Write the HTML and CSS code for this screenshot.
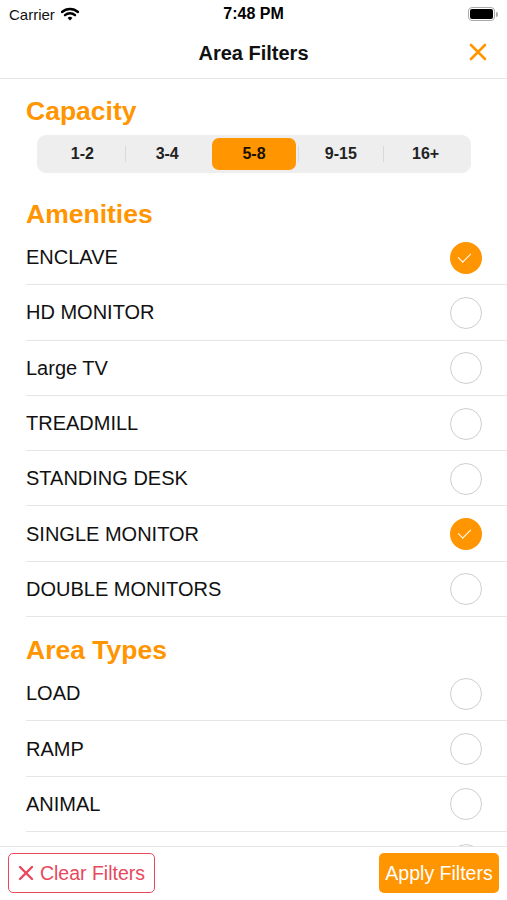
FILE: index.html
```html
<!DOCTYPE html>
<html lang="en">
<head>
    <meta charset="UTF-8">
    <meta name="viewport" content="width=device-width, initial-scale=1.0">
    <title>Area Filters</title>
    <link rel="stylesheet" href="styles.css">
</head>
<body>

<div class="screen">
    <div class="status-bar">
        <div class="carrier">
            Carrier
            <svg class="wifi" width="18" height="14" viewBox="0 0 18 14">
                <path d="M1 5 A12 12 0 0 1 17 5" fill="none" stroke="#000" stroke-width="2.4" stroke-linecap="round"/>
                <path d="M4 8.2 A7.5 7.5 0 0 1 14 8.2" fill="none" stroke="#000" stroke-width="2.4" stroke-linecap="round"/>
                <path d="M9 13.5 L6.6 11 A3.4 3.4 0 0 1 11.4 11 Z" fill="#000"/>
            </svg>
        </div>
        <div class="clock">7:48 PM</div>
        <div class="battery">
            <span class="battery-body"><span class="battery-level"></span></span>
            <span class="battery-cap"></span>
        </div>
    </div>

    <div class="nav-bar">
        <h1>Area Filters</h1>
        <svg class="close" width="18" height="18" viewBox="0 0 18 18">
            <path d="M2 2 L16 16 M16 2 L2 16" stroke="#ff9500" stroke-width="2.6" stroke-linecap="round"/>
        </svg>
    </div>

    <div class="content">
        <h2 class="section-title first">Capacity</h2>
        <div class="segmented">
            <div class="segment">1-2</div>
            <div class="segment divided">3-4</div>
            <div class="segment selected">5-8</div>
            <div class="segment divided">9-15</div>
            <div class="segment divided">16+</div>
        </div>

        <h2 class="section-title">Amenities</h2>
        <ul class="option-list">
            <li>ENCLAVE <span class="check on"></span></li>
            <li>HD MONITOR <span class="check"></span></li>
            <li>Large TV <span class="check"></span></li>
            <li>TREADMILL <span class="check"></span></li>
            <li>STANDING DESK <span class="check"></span></li>
            <li>SINGLE MONITOR <span class="check on"></span></li>
            <li>DOUBLE MONITORS <span class="check"></span></li>
        </ul>

        <h2 class="section-title">Area Types</h2>
        <ul class="option-list">
            <li>LOAD <span class="check"></span></li>
            <li>RAMP <span class="check"></span></li>
            <li>ANIMAL <span class="check"></span></li>
            <!-- next row sits under the footer, only its circle peeks out -->
            <li><span></span> <span class="check"></span></li>
        </ul>
    </div>

    <div class="footer">
        <button class="btn-clear">
            <svg width="16" height="16" viewBox="0 0 16 16">
                <path d="M2 2 L14 14 M14 2 L2 14" stroke="#e8485c" stroke-width="2.4" stroke-linecap="round"/>
            </svg>
            <span>Clear Filters</span>
        </button>
        <button class="btn-apply">Apply Filters</button>
    </div>
</div>

</body>
</html>
```

FILE: styles.css
```css
body {
    margin: 0;
    font-family: "Liberation Sans", Arial, sans-serif;
    background-color: #fff;
    color: #000;
}

.screen {
    height: 900px;
    display: flex;
    flex-direction: column;
    overflow: hidden;
}

/* status bar */
.status-bar {
    height: 28px;
    display: flex;
    align-items: center;
    justify-content: space-between;
    padding: 0 9px;
    flex-shrink: 0;
}

.carrier {
    flex: 1;
    display: flex;
    align-items: center;
    gap: 6px;
    font-size: 15px;
    color: #111;
}

.clock {
    font-size: 16px;
    font-weight: bold;
}

.battery {
    flex: 1;
    display: flex;
    justify-content: flex-end;
    align-items: center;
}

.battery-body {
    width: 23px;
    height: 10px;
    border: 1.5px solid #aaa;
    border-radius: 4px;
    padding: 1px;
    display: flex;
}

.battery-level {
    flex: 1;
    background-color: #000;
    border-radius: 2px;
}

.battery-cap {
    width: 2px;
    height: 5px;
    margin-left: 1px;
    background-color: #aaa;
    border-radius: 0 2px 2px 0;
}

/* nav bar */
.nav-bar {
    height: 50px;
    border-bottom: 1px solid #e6e6e6;
    display: flex;
    align-items: center;
    justify-content: center;
    position: relative;
    flex-shrink: 0;
}

.nav-bar h1 {
    margin: 0;
    font-size: 20px;
    font-weight: bold;
    color: #111;
}

.nav-bar .close {
    position: absolute;
    right: 20px;
    top: 15px;
}

/* content */
.content {
    flex: 1;
    overflow: hidden;
}

.section-title {
    margin: 17px 0 0;
    padding-left: 26px;
    font-size: 26.5px;
    line-height: 32px;
    font-weight: bold;
    color: #ff9500;
}

.section-title.first {
    margin-top: 16px;
}

.segmented {
    margin: 8px 36px 25px 37px;
    height: 38px;
    box-sizing: border-box;
    padding: 3px;
    background-color: #eeeeef;
    border-radius: 9px;
    display: flex;
}

.segment {
    flex: 1;
    display: flex;
    align-items: center;
    justify-content: center;
    font-size: 16px;
    font-weight: bold;
    color: #222;
    position: relative;
}

.segment.divided::before {
    content: "";
    position: absolute;
    left: 0;
    top: 8px;
    bottom: 8px;
    width: 1px;
    background-color: #d9d9db;
}

.segment.selected {
    background-color: #ff9500;
    border-radius: 7px;
    color: #1a1000;
    margin: 0 2px;
}

.option-list {
    list-style: none;
    margin: 0;
    padding: 0 0 0 26px;
}

.option-list li {
    border-bottom: 1px solid #e6e6e6;
    display: flex;
    align-items: center;
    justify-content: space-between;
    padding-right: 25px;
    padding-top: 1px;
    box-sizing: border-box;
    height: 55.3px;
    font-size: 20px;
    color: #111;
}

.check {
    width: 32px;
    height: 32px;
    box-sizing: border-box;
    border: 1.5px solid #cfcfcf;
    border-radius: 50%;
    position: relative;
}

.check.on {
    border: none;
    background-color: #ff9500;
}

.check.on::after {
    content: "";
    position: absolute;
    left: 11px;
    top: 8px;
    width: 6px;
    height: 11px;
    border-right: 1.5px solid #fff;
    border-bottom: 1.5px solid #fff;
    transform: rotate(45deg);
}

/* footer */
.footer {
    height: 54px;
    box-sizing: border-box;
    border-top: 1px solid #e6e6e6;
    background-color: #fff;
    display: flex;
    justify-content: space-between;
    align-items: flex-start;
    padding: 6px 8px 0;
    flex-shrink: 0;
}

.footer button {
    height: 40px;
    font-family: "Liberation Sans", Arial, sans-serif;
    font-size: 19.5px;
    border-radius: 5px;
    cursor: pointer;
    display: flex;
    align-items: center;
    justify-content: center;
    padding: 0;
}

.btn-clear {
    width: 147px;
    background-color: #fff;
    border: 1.5px solid #e8485c;
    color: #e8485c;
    gap: 6px;
}

.btn-apply {
    width: 120px;
    background-color: #ff9500;
    border: none;
    color: #fff;
}
```
